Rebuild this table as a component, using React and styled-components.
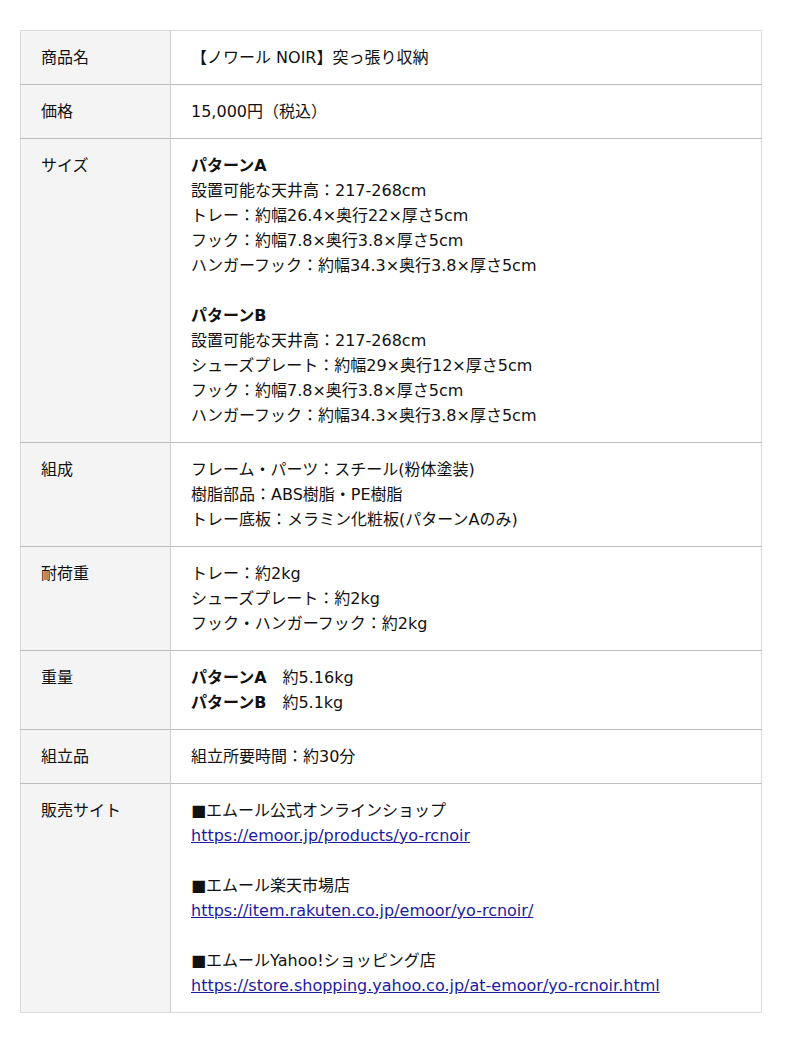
import React from "react";
import styled, { createGlobalStyle } from "styled-components";

const FONT = `"DejaVu Sans", "Noto Sans CJK JP", sans-serif`;

const Global = createGlobalStyle`
  body {
    margin: 0;
    background: #fff;
    font-family: ${FONT};
    color: #111;
  }
`;

const Page = styled.div`
  padding: 30px 38px 30px 20px;
`;

const Table = styled.table`
  width: 742px;
  border-collapse: collapse;
  border: 1px solid #dcdcdc;
  font-family: ${FONT};
  font-size: 16px;
  line-height: 25px;
  color: #111;
`;

const Row = styled.tr`
  border-top: 1px solid #bdbdbd;
  &:first-child {
    border-top: 1px solid #dcdcdc;
  }
`;

const Label = styled.th`
  width: 150px;
  box-sizing: border-box;
  background: #f4f4f4;
  text-align: left;
  font-family: ${FONT};
  font-weight: normal;
  vertical-align: top;
  padding: 14px 20px;
  border-right: 1px solid #cfcfcf;
`;

const Value = styled.td`
  vertical-align: top;
  font-family: ${FONT};
  padding: 14px 20px;
`;

const Line = styled.div`
  min-height: 25px;
`;

const Bold = styled.b`
  font-weight: bold;
`;

const Link = styled.a`
  color: #1c1ca0;
  text-decoration: underline;
`;

const rows = [
  { label: "商品名", lines: ["【ノワール NOIR】突っ張り収納"] },
  { label: "価格", lines: ["15,000円（税込）"] },
  {
    label: "サイズ",
    lines: [
      <Bold>パターンA</Bold>,
      "設置可能な天井高：217-268cm",
      "トレー：約幅26.4×奥行22×厚さ5cm",
      "フック：約幅7.8×奥行3.8×厚さ5cm",
      "ハンガーフック：約幅34.3×奥行3.8×厚さ5cm",
      "",
      <Bold>パターンB</Bold>,
      "設置可能な天井高：217-268cm",
      "シューズプレート：約幅29×奥行12×厚さ5cm",
      "フック：約幅7.8×奥行3.8×厚さ5cm",
      "ハンガーフック：約幅34.3×奥行3.8×厚さ5cm",
    ],
  },
  {
    label: "組成",
    lines: [
      "フレーム・パーツ：スチール(粉体塗装)",
      "樹脂部品：ABS樹脂・PE樹脂",
      "トレー底板：メラミン化粧板(パターンAのみ)",
    ],
  },
  {
    label: "耐荷重",
    lines: ["トレー：約2kg", "シューズプレート：約2kg", "フック・ハンガーフック：約2kg"],
  },
  {
    label: "重量",
    lines: [
      <>
        <Bold>パターンA</Bold>　約5.16kg
      </>,
      <>
        <Bold>パターンB</Bold>　約5.1kg
      </>,
    ],
  },
  { label: "組立品", lines: ["組立所要時間：約30分"] },
  {
    label: "販売サイト",
    lines: [
      "■エムール公式オンラインショップ",
      <Link href="#">https://emoor.jp/products/yo-rcnoir</Link>,
      "",
      "■エムール楽天市場店",
      <Link href="#">https://item.rakuten.co.jp/emoor/yo-rcnoir/</Link>,
      "",
      "■エムールYahoo!ショッピング店",
      <Link href="#">https://store.shopping.yahoo.co.jp/at-emoor/yo-rcnoir.html</Link>,
    ],
  },
];

export default function App() {
  return (
    <Page>
      <Global />
      <Table>
        <tbody>
          {rows.map((r) => (
            <Row key={r.label}>
              <Label>{r.label}</Label>
              <Value>
                {r.lines.map((l, i) => (
                  <Line key={i}>{l}</Line>
                ))}
              </Value>
            </Row>
          ))}
        </tbody>
      </Table>
    </Page>
  );
}
